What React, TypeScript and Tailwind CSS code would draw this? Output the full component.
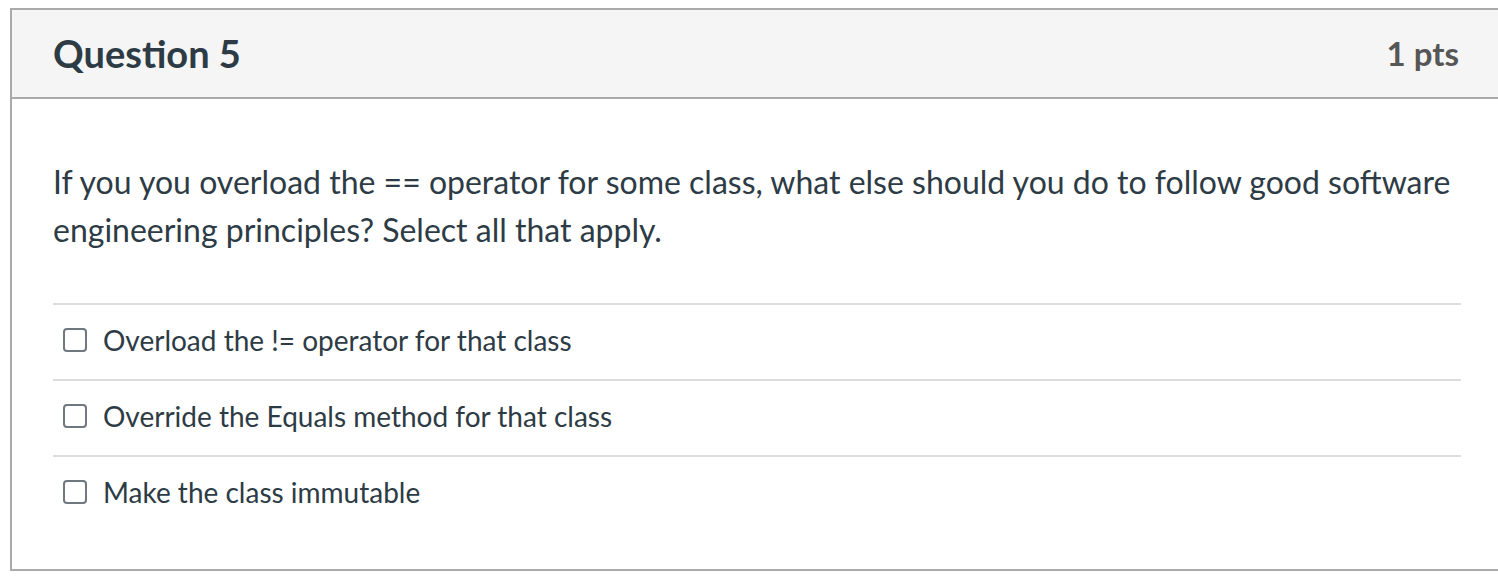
const options = [
  "Overload the != operator for that class",
  "Override the Equals method for that class",
  "Make the class immutable",
];

export default function App() {
  return (
    <div className="w-[1498px] h-[578px] overflow-hidden bg-white pt-2 pl-[10px] font-['Lato','Noto_Sans',sans-serif] text-[#2d3b45]">
      <div className="w-[1492px] border-2 border-[#aaaaaa]">
        <div className="flex items-center justify-between h-[89px] bg-[#f5f5f5] border-b-2 border-[#aaaaaa] px-[41px]">
          <h2 className="text-[38px] font-bold">Question 5</h2>
          <span className="text-[33px] font-bold text-[#565656]">1 pts</span>
        </div>
        <div className="px-[41px] pt-[59px] pb-[38px]">
          <p className="text-[32px] leading-[48px] mb-[49px]">
            If you you overload the == operator for some class, what else should you do to follow good software
            engineering principles? Select all that apply.
          </p>
          <div className="w-[1408px]">
            {options.map((opt) => (
              <label key={opt} className="flex items-center gap-4 h-[76px] pb-1 border-t-2 border-[#dddddd] pl-[10px]">
                <span className="w-6 h-6 rounded-[4px] border-2 border-[#6f7780] bg-white shrink-0" />
                <span className="text-[28px]">{opt}</span>
              </label>
            ))}
          </div>
        </div>
      </div>
    </div>
  );
}
